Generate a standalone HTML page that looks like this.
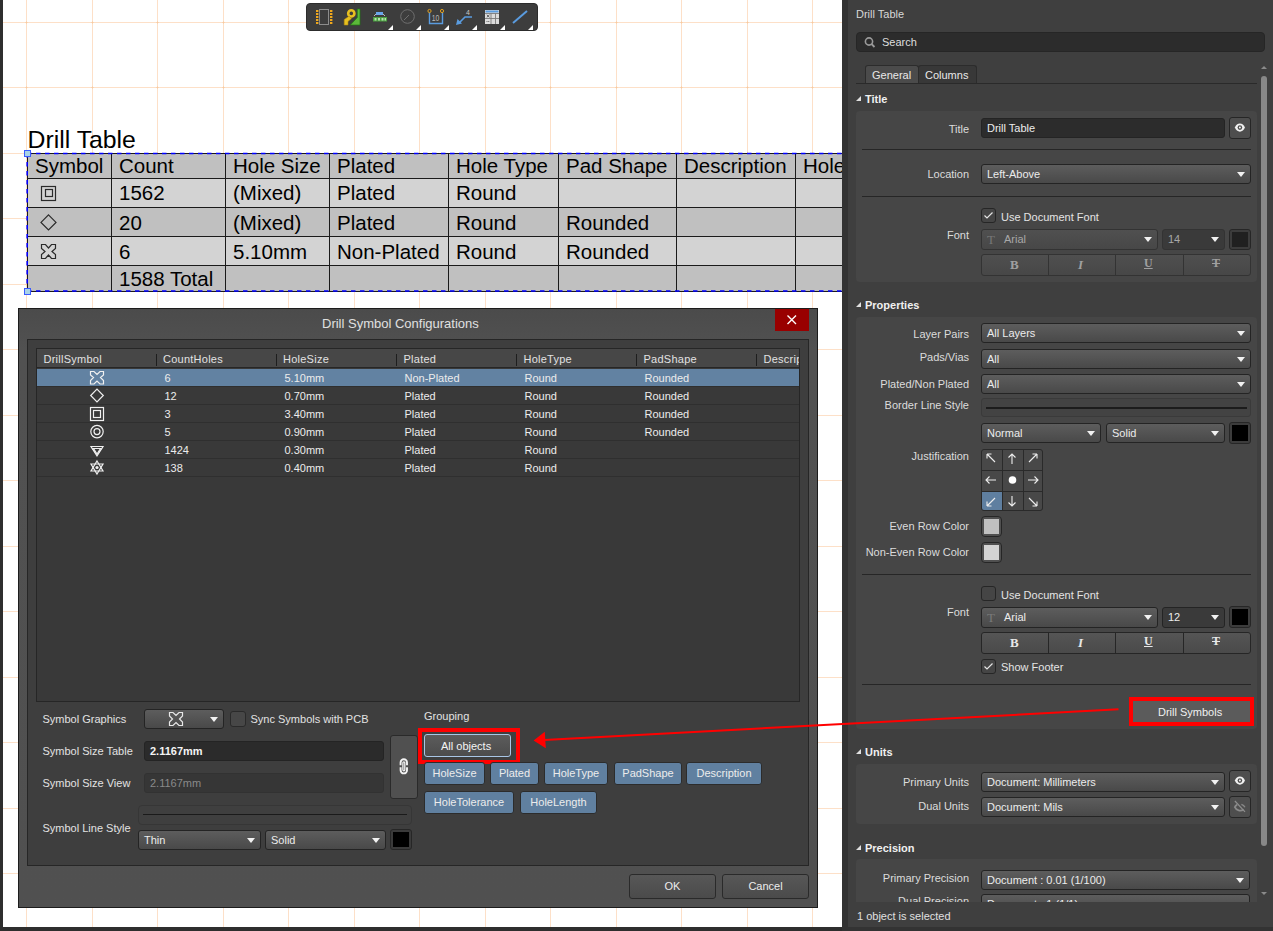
<!DOCTYPE html>
<html><head><meta charset="utf-8">
<style>
*{margin:0;padding:0;box-sizing:border-box}
html,body{width:1273px;height:931px;overflow:hidden;background:#2e2e2e;font-family:"Liberation Sans",sans-serif}
.a{position:absolute}
.t{position:absolute;white-space:nowrap;font-size:11px;line-height:13px;color:#dcdcdc}
#canvas{position:absolute;left:3px;top:0;width:839px;height:927px;background:#fff;overflow:hidden}
.sec{position:absolute;background:#464646;border-radius:4px}
.hd{position:absolute;white-space:nowrap;font-size:11px;line-height:13px;color:#f0f0f0;font-weight:bold}
.tri{position:absolute;width:0;height:0;border-left:5px solid transparent;border-bottom:5px solid #e0e0e0}
.lb{position:absolute;white-space:nowrap;font-size:11px;line-height:13px;color:#dcdcdc;text-align:right;right:304px}
.dd{position:absolute;height:20px;border:1px solid #242424;border-radius:3px;background:linear-gradient(#5d5d5d,#494949);font-size:11px;line-height:18px;color:#ececec;padding-left:5px;white-space:nowrap}
.dd:after{content:"";position:absolute;right:5px;top:7px;border-left:4px solid transparent;border-right:4px solid transparent;border-top:5px solid #f2f2f2}
.inp{position:absolute;height:20px;border:1px solid #242424;border-radius:3px;background:#2c2c2c;font-size:11px;line-height:18px;color:#ececec;padding-left:5px;white-space:nowrap}
.sep{position:absolute;height:1px;background:#262626}
.btn{position:absolute;border:1px solid #262626;border-radius:3px;background:#4d4d4d}
.cb{position:absolute;width:15px;height:15px;border:1px solid #262626;border-radius:3px;background:#454545}

</style></head>
<body>
<!-- CANVAS -->
<div id="canvas">
<svg class="a" style="left:0;top:0" width="839" height="927" shape-rendering="crispEdges">
<g stroke="#fde0c8" stroke-width="1">
<line x1="23.5" y1="0" x2="23.5" y2="927"/>
<line x1="89.5" y1="0" x2="89.5" y2="927"/>
<line x1="154.5" y1="0" x2="154.5" y2="927"/>
<line x1="220.5" y1="0" x2="220.5" y2="927"/>
<line x1="285.5" y1="0" x2="285.5" y2="927"/>
<line x1="351.5" y1="0" x2="351.5" y2="927"/>
<line x1="416.5" y1="0" x2="416.5" y2="927"/>
<line x1="482.5" y1="0" x2="482.5" y2="927"/>
<line x1="547.5" y1="0" x2="547.5" y2="927"/>
<line x1="613.5" y1="0" x2="613.5" y2="927"/>
<line x1="678.5" y1="0" x2="678.5" y2="927"/>
<line x1="744.5" y1="0" x2="744.5" y2="927"/>
<line x1="809.5" y1="0" x2="809.5" y2="927"/>
<line x1="0" y1="22.5" x2="839" y2="22.5"/>
<line x1="0" y1="87.5" x2="839" y2="87.5"/>
<line x1="0" y1="153.5" x2="839" y2="153.5"/>
<line x1="0" y1="218.5" x2="839" y2="218.5"/>
<line x1="0" y1="284.5" x2="839" y2="284.5"/>
<line x1="0" y1="349.5" x2="839" y2="349.5"/>
<line x1="0" y1="415.5" x2="839" y2="415.5"/>
<line x1="0" y1="480.5" x2="839" y2="480.5"/>
<line x1="0" y1="546.5" x2="839" y2="546.5"/>
<line x1="0" y1="611.5" x2="839" y2="611.5"/>
<line x1="0" y1="677.5" x2="839" y2="677.5"/>
<line x1="0" y1="742.5" x2="839" y2="742.5"/>
<line x1="0" y1="808.5" x2="839" y2="808.5"/>
<line x1="0" y1="873.5" x2="839" y2="873.5"/>
</g>
<g fill="#f8caa0"><rect x="23" y="22" width="1" height="1"/><rect x="22" y="22" width="3" height="1" fill-opacity="0.5"/><rect x="23" y="21" width="1" height="3" fill-opacity="0.5"/><rect x="23" y="87" width="1" height="1"/><rect x="22" y="87" width="3" height="1" fill-opacity="0.5"/><rect x="23" y="86" width="1" height="3" fill-opacity="0.5"/><rect x="23" y="153" width="1" height="1"/><rect x="22" y="153" width="3" height="1" fill-opacity="0.5"/><rect x="23" y="152" width="1" height="3" fill-opacity="0.5"/><rect x="23" y="218" width="1" height="1"/><rect x="22" y="218" width="3" height="1" fill-opacity="0.5"/><rect x="23" y="217" width="1" height="3" fill-opacity="0.5"/><rect x="23" y="284" width="1" height="1"/><rect x="22" y="284" width="3" height="1" fill-opacity="0.5"/><rect x="23" y="283" width="1" height="3" fill-opacity="0.5"/><rect x="23" y="349" width="1" height="1"/><rect x="22" y="349" width="3" height="1" fill-opacity="0.5"/><rect x="23" y="348" width="1" height="3" fill-opacity="0.5"/><rect x="23" y="415" width="1" height="1"/><rect x="22" y="415" width="3" height="1" fill-opacity="0.5"/><rect x="23" y="414" width="1" height="3" fill-opacity="0.5"/><rect x="23" y="480" width="1" height="1"/><rect x="22" y="480" width="3" height="1" fill-opacity="0.5"/><rect x="23" y="479" width="1" height="3" fill-opacity="0.5"/><rect x="23" y="546" width="1" height="1"/><rect x="22" y="546" width="3" height="1" fill-opacity="0.5"/><rect x="23" y="545" width="1" height="3" fill-opacity="0.5"/><rect x="23" y="611" width="1" height="1"/><rect x="22" y="611" width="3" height="1" fill-opacity="0.5"/><rect x="23" y="610" width="1" height="3" fill-opacity="0.5"/><rect x="23" y="677" width="1" height="1"/><rect x="22" y="677" width="3" height="1" fill-opacity="0.5"/><rect x="23" y="676" width="1" height="3" fill-opacity="0.5"/><rect x="23" y="742" width="1" height="1"/><rect x="22" y="742" width="3" height="1" fill-opacity="0.5"/><rect x="23" y="741" width="1" height="3" fill-opacity="0.5"/><rect x="23" y="808" width="1" height="1"/><rect x="22" y="808" width="3" height="1" fill-opacity="0.5"/><rect x="23" y="807" width="1" height="3" fill-opacity="0.5"/><rect x="23" y="873" width="1" height="1"/><rect x="22" y="873" width="3" height="1" fill-opacity="0.5"/><rect x="23" y="872" width="1" height="3" fill-opacity="0.5"/><rect x="89" y="22" width="1" height="1"/><rect x="88" y="22" width="3" height="1" fill-opacity="0.5"/><rect x="89" y="21" width="1" height="3" fill-opacity="0.5"/><rect x="89" y="87" width="1" height="1"/><rect x="88" y="87" width="3" height="1" fill-opacity="0.5"/><rect x="89" y="86" width="1" height="3" fill-opacity="0.5"/><rect x="89" y="153" width="1" height="1"/><rect x="88" y="153" width="3" height="1" fill-opacity="0.5"/><rect x="89" y="152" width="1" height="3" fill-opacity="0.5"/><rect x="89" y="218" width="1" height="1"/><rect x="88" y="218" width="3" height="1" fill-opacity="0.5"/><rect x="89" y="217" width="1" height="3" fill-opacity="0.5"/><rect x="89" y="284" width="1" height="1"/><rect x="88" y="284" width="3" height="1" fill-opacity="0.5"/><rect x="89" y="283" width="1" height="3" fill-opacity="0.5"/><rect x="89" y="349" width="1" height="1"/><rect x="88" y="349" width="3" height="1" fill-opacity="0.5"/><rect x="89" y="348" width="1" height="3" fill-opacity="0.5"/><rect x="89" y="415" width="1" height="1"/><rect x="88" y="415" width="3" height="1" fill-opacity="0.5"/><rect x="89" y="414" width="1" height="3" fill-opacity="0.5"/><rect x="89" y="480" width="1" height="1"/><rect x="88" y="480" width="3" height="1" fill-opacity="0.5"/><rect x="89" y="479" width="1" height="3" fill-opacity="0.5"/><rect x="89" y="546" width="1" height="1"/><rect x="88" y="546" width="3" height="1" fill-opacity="0.5"/><rect x="89" y="545" width="1" height="3" fill-opacity="0.5"/><rect x="89" y="611" width="1" height="1"/><rect x="88" y="611" width="3" height="1" fill-opacity="0.5"/><rect x="89" y="610" width="1" height="3" fill-opacity="0.5"/><rect x="89" y="677" width="1" height="1"/><rect x="88" y="677" width="3" height="1" fill-opacity="0.5"/><rect x="89" y="676" width="1" height="3" fill-opacity="0.5"/><rect x="89" y="742" width="1" height="1"/><rect x="88" y="742" width="3" height="1" fill-opacity="0.5"/><rect x="89" y="741" width="1" height="3" fill-opacity="0.5"/><rect x="89" y="808" width="1" height="1"/><rect x="88" y="808" width="3" height="1" fill-opacity="0.5"/><rect x="89" y="807" width="1" height="3" fill-opacity="0.5"/><rect x="89" y="873" width="1" height="1"/><rect x="88" y="873" width="3" height="1" fill-opacity="0.5"/><rect x="89" y="872" width="1" height="3" fill-opacity="0.5"/><rect x="154" y="22" width="1" height="1"/><rect x="153" y="22" width="3" height="1" fill-opacity="0.5"/><rect x="154" y="21" width="1" height="3" fill-opacity="0.5"/><rect x="154" y="87" width="1" height="1"/><rect x="153" y="87" width="3" height="1" fill-opacity="0.5"/><rect x="154" y="86" width="1" height="3" fill-opacity="0.5"/><rect x="154" y="153" width="1" height="1"/><rect x="153" y="153" width="3" height="1" fill-opacity="0.5"/><rect x="154" y="152" width="1" height="3" fill-opacity="0.5"/><rect x="154" y="218" width="1" height="1"/><rect x="153" y="218" width="3" height="1" fill-opacity="0.5"/><rect x="154" y="217" width="1" height="3" fill-opacity="0.5"/><rect x="154" y="284" width="1" height="1"/><rect x="153" y="284" width="3" height="1" fill-opacity="0.5"/><rect x="154" y="283" width="1" height="3" fill-opacity="0.5"/><rect x="154" y="349" width="1" height="1"/><rect x="153" y="349" width="3" height="1" fill-opacity="0.5"/><rect x="154" y="348" width="1" height="3" fill-opacity="0.5"/><rect x="154" y="415" width="1" height="1"/><rect x="153" y="415" width="3" height="1" fill-opacity="0.5"/><rect x="154" y="414" width="1" height="3" fill-opacity="0.5"/><rect x="154" y="480" width="1" height="1"/><rect x="153" y="480" width="3" height="1" fill-opacity="0.5"/><rect x="154" y="479" width="1" height="3" fill-opacity="0.5"/><rect x="154" y="546" width="1" height="1"/><rect x="153" y="546" width="3" height="1" fill-opacity="0.5"/><rect x="154" y="545" width="1" height="3" fill-opacity="0.5"/><rect x="154" y="611" width="1" height="1"/><rect x="153" y="611" width="3" height="1" fill-opacity="0.5"/><rect x="154" y="610" width="1" height="3" fill-opacity="0.5"/><rect x="154" y="677" width="1" height="1"/><rect x="153" y="677" width="3" height="1" fill-opacity="0.5"/><rect x="154" y="676" width="1" height="3" fill-opacity="0.5"/><rect x="154" y="742" width="1" height="1"/><rect x="153" y="742" width="3" height="1" fill-opacity="0.5"/><rect x="154" y="741" width="1" height="3" fill-opacity="0.5"/><rect x="154" y="808" width="1" height="1"/><rect x="153" y="808" width="3" height="1" fill-opacity="0.5"/><rect x="154" y="807" width="1" height="3" fill-opacity="0.5"/><rect x="154" y="873" width="1" height="1"/><rect x="153" y="873" width="3" height="1" fill-opacity="0.5"/><rect x="154" y="872" width="1" height="3" fill-opacity="0.5"/><rect x="220" y="22" width="1" height="1"/><rect x="219" y="22" width="3" height="1" fill-opacity="0.5"/><rect x="220" y="21" width="1" height="3" fill-opacity="0.5"/><rect x="220" y="87" width="1" height="1"/><rect x="219" y="87" width="3" height="1" fill-opacity="0.5"/><rect x="220" y="86" width="1" height="3" fill-opacity="0.5"/><rect x="220" y="153" width="1" height="1"/><rect x="219" y="153" width="3" height="1" fill-opacity="0.5"/><rect x="220" y="152" width="1" height="3" fill-opacity="0.5"/><rect x="220" y="218" width="1" height="1"/><rect x="219" y="218" width="3" height="1" fill-opacity="0.5"/><rect x="220" y="217" width="1" height="3" fill-opacity="0.5"/><rect x="220" y="284" width="1" height="1"/><rect x="219" y="284" width="3" height="1" fill-opacity="0.5"/><rect x="220" y="283" width="1" height="3" fill-opacity="0.5"/><rect x="220" y="349" width="1" height="1"/><rect x="219" y="349" width="3" height="1" fill-opacity="0.5"/><rect x="220" y="348" width="1" height="3" fill-opacity="0.5"/><rect x="220" y="415" width="1" height="1"/><rect x="219" y="415" width="3" height="1" fill-opacity="0.5"/><rect x="220" y="414" width="1" height="3" fill-opacity="0.5"/><rect x="220" y="480" width="1" height="1"/><rect x="219" y="480" width="3" height="1" fill-opacity="0.5"/><rect x="220" y="479" width="1" height="3" fill-opacity="0.5"/><rect x="220" y="546" width="1" height="1"/><rect x="219" y="546" width="3" height="1" fill-opacity="0.5"/><rect x="220" y="545" width="1" height="3" fill-opacity="0.5"/><rect x="220" y="611" width="1" height="1"/><rect x="219" y="611" width="3" height="1" fill-opacity="0.5"/><rect x="220" y="610" width="1" height="3" fill-opacity="0.5"/><rect x="220" y="677" width="1" height="1"/><rect x="219" y="677" width="3" height="1" fill-opacity="0.5"/><rect x="220" y="676" width="1" height="3" fill-opacity="0.5"/><rect x="220" y="742" width="1" height="1"/><rect x="219" y="742" width="3" height="1" fill-opacity="0.5"/><rect x="220" y="741" width="1" height="3" fill-opacity="0.5"/><rect x="220" y="808" width="1" height="1"/><rect x="219" y="808" width="3" height="1" fill-opacity="0.5"/><rect x="220" y="807" width="1" height="3" fill-opacity="0.5"/><rect x="220" y="873" width="1" height="1"/><rect x="219" y="873" width="3" height="1" fill-opacity="0.5"/><rect x="220" y="872" width="1" height="3" fill-opacity="0.5"/><rect x="285" y="22" width="1" height="1"/><rect x="284" y="22" width="3" height="1" fill-opacity="0.5"/><rect x="285" y="21" width="1" height="3" fill-opacity="0.5"/><rect x="285" y="87" width="1" height="1"/><rect x="284" y="87" width="3" height="1" fill-opacity="0.5"/><rect x="285" y="86" width="1" height="3" fill-opacity="0.5"/><rect x="285" y="153" width="1" height="1"/><rect x="284" y="153" width="3" height="1" fill-opacity="0.5"/><rect x="285" y="152" width="1" height="3" fill-opacity="0.5"/><rect x="285" y="218" width="1" height="1"/><rect x="284" y="218" width="3" height="1" fill-opacity="0.5"/><rect x="285" y="217" width="1" height="3" fill-opacity="0.5"/><rect x="285" y="284" width="1" height="1"/><rect x="284" y="284" width="3" height="1" fill-opacity="0.5"/><rect x="285" y="283" width="1" height="3" fill-opacity="0.5"/><rect x="285" y="349" width="1" height="1"/><rect x="284" y="349" width="3" height="1" fill-opacity="0.5"/><rect x="285" y="348" width="1" height="3" fill-opacity="0.5"/><rect x="285" y="415" width="1" height="1"/><rect x="284" y="415" width="3" height="1" fill-opacity="0.5"/><rect x="285" y="414" width="1" height="3" fill-opacity="0.5"/><rect x="285" y="480" width="1" height="1"/><rect x="284" y="480" width="3" height="1" fill-opacity="0.5"/><rect x="285" y="479" width="1" height="3" fill-opacity="0.5"/><rect x="285" y="546" width="1" height="1"/><rect x="284" y="546" width="3" height="1" fill-opacity="0.5"/><rect x="285" y="545" width="1" height="3" fill-opacity="0.5"/><rect x="285" y="611" width="1" height="1"/><rect x="284" y="611" width="3" height="1" fill-opacity="0.5"/><rect x="285" y="610" width="1" height="3" fill-opacity="0.5"/><rect x="285" y="677" width="1" height="1"/><rect x="284" y="677" width="3" height="1" fill-opacity="0.5"/><rect x="285" y="676" width="1" height="3" fill-opacity="0.5"/><rect x="285" y="742" width="1" height="1"/><rect x="284" y="742" width="3" height="1" fill-opacity="0.5"/><rect x="285" y="741" width="1" height="3" fill-opacity="0.5"/><rect x="285" y="808" width="1" height="1"/><rect x="284" y="808" width="3" height="1" fill-opacity="0.5"/><rect x="285" y="807" width="1" height="3" fill-opacity="0.5"/><rect x="285" y="873" width="1" height="1"/><rect x="284" y="873" width="3" height="1" fill-opacity="0.5"/><rect x="285" y="872" width="1" height="3" fill-opacity="0.5"/><rect x="351" y="22" width="1" height="1"/><rect x="350" y="22" width="3" height="1" fill-opacity="0.5"/><rect x="351" y="21" width="1" height="3" fill-opacity="0.5"/><rect x="351" y="87" width="1" height="1"/><rect x="350" y="87" width="3" height="1" fill-opacity="0.5"/><rect x="351" y="86" width="1" height="3" fill-opacity="0.5"/><rect x="351" y="153" width="1" height="1"/><rect x="350" y="153" width="3" height="1" fill-opacity="0.5"/><rect x="351" y="152" width="1" height="3" fill-opacity="0.5"/><rect x="351" y="218" width="1" height="1"/><rect x="350" y="218" width="3" height="1" fill-opacity="0.5"/><rect x="351" y="217" width="1" height="3" fill-opacity="0.5"/><rect x="351" y="284" width="1" height="1"/><rect x="350" y="284" width="3" height="1" fill-opacity="0.5"/><rect x="351" y="283" width="1" height="3" fill-opacity="0.5"/><rect x="351" y="349" width="1" height="1"/><rect x="350" y="349" width="3" height="1" fill-opacity="0.5"/><rect x="351" y="348" width="1" height="3" fill-opacity="0.5"/><rect x="351" y="415" width="1" height="1"/><rect x="350" y="415" width="3" height="1" fill-opacity="0.5"/><rect x="351" y="414" width="1" height="3" fill-opacity="0.5"/><rect x="351" y="480" width="1" height="1"/><rect x="350" y="480" width="3" height="1" fill-opacity="0.5"/><rect x="351" y="479" width="1" height="3" fill-opacity="0.5"/><rect x="351" y="546" width="1" height="1"/><rect x="350" y="546" width="3" height="1" fill-opacity="0.5"/><rect x="351" y="545" width="1" height="3" fill-opacity="0.5"/><rect x="351" y="611" width="1" height="1"/><rect x="350" y="611" width="3" height="1" fill-opacity="0.5"/><rect x="351" y="610" width="1" height="3" fill-opacity="0.5"/><rect x="351" y="677" width="1" height="1"/><rect x="350" y="677" width="3" height="1" fill-opacity="0.5"/><rect x="351" y="676" width="1" height="3" fill-opacity="0.5"/><rect x="351" y="742" width="1" height="1"/><rect x="350" y="742" width="3" height="1" fill-opacity="0.5"/><rect x="351" y="741" width="1" height="3" fill-opacity="0.5"/><rect x="351" y="808" width="1" height="1"/><rect x="350" y="808" width="3" height="1" fill-opacity="0.5"/><rect x="351" y="807" width="1" height="3" fill-opacity="0.5"/><rect x="351" y="873" width="1" height="1"/><rect x="350" y="873" width="3" height="1" fill-opacity="0.5"/><rect x="351" y="872" width="1" height="3" fill-opacity="0.5"/><rect x="416" y="22" width="1" height="1"/><rect x="415" y="22" width="3" height="1" fill-opacity="0.5"/><rect x="416" y="21" width="1" height="3" fill-opacity="0.5"/><rect x="416" y="87" width="1" height="1"/><rect x="415" y="87" width="3" height="1" fill-opacity="0.5"/><rect x="416" y="86" width="1" height="3" fill-opacity="0.5"/><rect x="416" y="153" width="1" height="1"/><rect x="415" y="153" width="3" height="1" fill-opacity="0.5"/><rect x="416" y="152" width="1" height="3" fill-opacity="0.5"/><rect x="416" y="218" width="1" height="1"/><rect x="415" y="218" width="3" height="1" fill-opacity="0.5"/><rect x="416" y="217" width="1" height="3" fill-opacity="0.5"/><rect x="416" y="284" width="1" height="1"/><rect x="415" y="284" width="3" height="1" fill-opacity="0.5"/><rect x="416" y="283" width="1" height="3" fill-opacity="0.5"/><rect x="416" y="349" width="1" height="1"/><rect x="415" y="349" width="3" height="1" fill-opacity="0.5"/><rect x="416" y="348" width="1" height="3" fill-opacity="0.5"/><rect x="416" y="415" width="1" height="1"/><rect x="415" y="415" width="3" height="1" fill-opacity="0.5"/><rect x="416" y="414" width="1" height="3" fill-opacity="0.5"/><rect x="416" y="480" width="1" height="1"/><rect x="415" y="480" width="3" height="1" fill-opacity="0.5"/><rect x="416" y="479" width="1" height="3" fill-opacity="0.5"/><rect x="416" y="546" width="1" height="1"/><rect x="415" y="546" width="3" height="1" fill-opacity="0.5"/><rect x="416" y="545" width="1" height="3" fill-opacity="0.5"/><rect x="416" y="611" width="1" height="1"/><rect x="415" y="611" width="3" height="1" fill-opacity="0.5"/><rect x="416" y="610" width="1" height="3" fill-opacity="0.5"/><rect x="416" y="677" width="1" height="1"/><rect x="415" y="677" width="3" height="1" fill-opacity="0.5"/><rect x="416" y="676" width="1" height="3" fill-opacity="0.5"/><rect x="416" y="742" width="1" height="1"/><rect x="415" y="742" width="3" height="1" fill-opacity="0.5"/><rect x="416" y="741" width="1" height="3" fill-opacity="0.5"/><rect x="416" y="808" width="1" height="1"/><rect x="415" y="808" width="3" height="1" fill-opacity="0.5"/><rect x="416" y="807" width="1" height="3" fill-opacity="0.5"/><rect x="416" y="873" width="1" height="1"/><rect x="415" y="873" width="3" height="1" fill-opacity="0.5"/><rect x="416" y="872" width="1" height="3" fill-opacity="0.5"/><rect x="482" y="22" width="1" height="1"/><rect x="481" y="22" width="3" height="1" fill-opacity="0.5"/><rect x="482" y="21" width="1" height="3" fill-opacity="0.5"/><rect x="482" y="87" width="1" height="1"/><rect x="481" y="87" width="3" height="1" fill-opacity="0.5"/><rect x="482" y="86" width="1" height="3" fill-opacity="0.5"/><rect x="482" y="153" width="1" height="1"/><rect x="481" y="153" width="3" height="1" fill-opacity="0.5"/><rect x="482" y="152" width="1" height="3" fill-opacity="0.5"/><rect x="482" y="218" width="1" height="1"/><rect x="481" y="218" width="3" height="1" fill-opacity="0.5"/><rect x="482" y="217" width="1" height="3" fill-opacity="0.5"/><rect x="482" y="284" width="1" height="1"/><rect x="481" y="284" width="3" height="1" fill-opacity="0.5"/><rect x="482" y="283" width="1" height="3" fill-opacity="0.5"/><rect x="482" y="349" width="1" height="1"/><rect x="481" y="349" width="3" height="1" fill-opacity="0.5"/><rect x="482" y="348" width="1" height="3" fill-opacity="0.5"/><rect x="482" y="415" width="1" height="1"/><rect x="481" y="415" width="3" height="1" fill-opacity="0.5"/><rect x="482" y="414" width="1" height="3" fill-opacity="0.5"/><rect x="482" y="480" width="1" height="1"/><rect x="481" y="480" width="3" height="1" fill-opacity="0.5"/><rect x="482" y="479" width="1" height="3" fill-opacity="0.5"/><rect x="482" y="546" width="1" height="1"/><rect x="481" y="546" width="3" height="1" fill-opacity="0.5"/><rect x="482" y="545" width="1" height="3" fill-opacity="0.5"/><rect x="482" y="611" width="1" height="1"/><rect x="481" y="611" width="3" height="1" fill-opacity="0.5"/><rect x="482" y="610" width="1" height="3" fill-opacity="0.5"/><rect x="482" y="677" width="1" height="1"/><rect x="481" y="677" width="3" height="1" fill-opacity="0.5"/><rect x="482" y="676" width="1" height="3" fill-opacity="0.5"/><rect x="482" y="742" width="1" height="1"/><rect x="481" y="742" width="3" height="1" fill-opacity="0.5"/><rect x="482" y="741" width="1" height="3" fill-opacity="0.5"/><rect x="482" y="808" width="1" height="1"/><rect x="481" y="808" width="3" height="1" fill-opacity="0.5"/><rect x="482" y="807" width="1" height="3" fill-opacity="0.5"/><rect x="482" y="873" width="1" height="1"/><rect x="481" y="873" width="3" height="1" fill-opacity="0.5"/><rect x="482" y="872" width="1" height="3" fill-opacity="0.5"/><rect x="547" y="22" width="1" height="1"/><rect x="546" y="22" width="3" height="1" fill-opacity="0.5"/><rect x="547" y="21" width="1" height="3" fill-opacity="0.5"/><rect x="547" y="87" width="1" height="1"/><rect x="546" y="87" width="3" height="1" fill-opacity="0.5"/><rect x="547" y="86" width="1" height="3" fill-opacity="0.5"/><rect x="547" y="153" width="1" height="1"/><rect x="546" y="153" width="3" height="1" fill-opacity="0.5"/><rect x="547" y="152" width="1" height="3" fill-opacity="0.5"/><rect x="547" y="218" width="1" height="1"/><rect x="546" y="218" width="3" height="1" fill-opacity="0.5"/><rect x="547" y="217" width="1" height="3" fill-opacity="0.5"/><rect x="547" y="284" width="1" height="1"/><rect x="546" y="284" width="3" height="1" fill-opacity="0.5"/><rect x="547" y="283" width="1" height="3" fill-opacity="0.5"/><rect x="547" y="349" width="1" height="1"/><rect x="546" y="349" width="3" height="1" fill-opacity="0.5"/><rect x="547" y="348" width="1" height="3" fill-opacity="0.5"/><rect x="547" y="415" width="1" height="1"/><rect x="546" y="415" width="3" height="1" fill-opacity="0.5"/><rect x="547" y="414" width="1" height="3" fill-opacity="0.5"/><rect x="547" y="480" width="1" height="1"/><rect x="546" y="480" width="3" height="1" fill-opacity="0.5"/><rect x="547" y="479" width="1" height="3" fill-opacity="0.5"/><rect x="547" y="546" width="1" height="1"/><rect x="546" y="546" width="3" height="1" fill-opacity="0.5"/><rect x="547" y="545" width="1" height="3" fill-opacity="0.5"/><rect x="547" y="611" width="1" height="1"/><rect x="546" y="611" width="3" height="1" fill-opacity="0.5"/><rect x="547" y="610" width="1" height="3" fill-opacity="0.5"/><rect x="547" y="677" width="1" height="1"/><rect x="546" y="677" width="3" height="1" fill-opacity="0.5"/><rect x="547" y="676" width="1" height="3" fill-opacity="0.5"/><rect x="547" y="742" width="1" height="1"/><rect x="546" y="742" width="3" height="1" fill-opacity="0.5"/><rect x="547" y="741" width="1" height="3" fill-opacity="0.5"/><rect x="547" y="808" width="1" height="1"/><rect x="546" y="808" width="3" height="1" fill-opacity="0.5"/><rect x="547" y="807" width="1" height="3" fill-opacity="0.5"/><rect x="547" y="873" width="1" height="1"/><rect x="546" y="873" width="3" height="1" fill-opacity="0.5"/><rect x="547" y="872" width="1" height="3" fill-opacity="0.5"/><rect x="613" y="22" width="1" height="1"/><rect x="612" y="22" width="3" height="1" fill-opacity="0.5"/><rect x="613" y="21" width="1" height="3" fill-opacity="0.5"/><rect x="613" y="87" width="1" height="1"/><rect x="612" y="87" width="3" height="1" fill-opacity="0.5"/><rect x="613" y="86" width="1" height="3" fill-opacity="0.5"/><rect x="613" y="153" width="1" height="1"/><rect x="612" y="153" width="3" height="1" fill-opacity="0.5"/><rect x="613" y="152" width="1" height="3" fill-opacity="0.5"/><rect x="613" y="218" width="1" height="1"/><rect x="612" y="218" width="3" height="1" fill-opacity="0.5"/><rect x="613" y="217" width="1" height="3" fill-opacity="0.5"/><rect x="613" y="284" width="1" height="1"/><rect x="612" y="284" width="3" height="1" fill-opacity="0.5"/><rect x="613" y="283" width="1" height="3" fill-opacity="0.5"/><rect x="613" y="349" width="1" height="1"/><rect x="612" y="349" width="3" height="1" fill-opacity="0.5"/><rect x="613" y="348" width="1" height="3" fill-opacity="0.5"/><rect x="613" y="415" width="1" height="1"/><rect x="612" y="415" width="3" height="1" fill-opacity="0.5"/><rect x="613" y="414" width="1" height="3" fill-opacity="0.5"/><rect x="613" y="480" width="1" height="1"/><rect x="612" y="480" width="3" height="1" fill-opacity="0.5"/><rect x="613" y="479" width="1" height="3" fill-opacity="0.5"/><rect x="613" y="546" width="1" height="1"/><rect x="612" y="546" width="3" height="1" fill-opacity="0.5"/><rect x="613" y="545" width="1" height="3" fill-opacity="0.5"/><rect x="613" y="611" width="1" height="1"/><rect x="612" y="611" width="3" height="1" fill-opacity="0.5"/><rect x="613" y="610" width="1" height="3" fill-opacity="0.5"/><rect x="613" y="677" width="1" height="1"/><rect x="612" y="677" width="3" height="1" fill-opacity="0.5"/><rect x="613" y="676" width="1" height="3" fill-opacity="0.5"/><rect x="613" y="742" width="1" height="1"/><rect x="612" y="742" width="3" height="1" fill-opacity="0.5"/><rect x="613" y="741" width="1" height="3" fill-opacity="0.5"/><rect x="613" y="808" width="1" height="1"/><rect x="612" y="808" width="3" height="1" fill-opacity="0.5"/><rect x="613" y="807" width="1" height="3" fill-opacity="0.5"/><rect x="613" y="873" width="1" height="1"/><rect x="612" y="873" width="3" height="1" fill-opacity="0.5"/><rect x="613" y="872" width="1" height="3" fill-opacity="0.5"/><rect x="678" y="22" width="1" height="1"/><rect x="677" y="22" width="3" height="1" fill-opacity="0.5"/><rect x="678" y="21" width="1" height="3" fill-opacity="0.5"/><rect x="678" y="87" width="1" height="1"/><rect x="677" y="87" width="3" height="1" fill-opacity="0.5"/><rect x="678" y="86" width="1" height="3" fill-opacity="0.5"/><rect x="678" y="153" width="1" height="1"/><rect x="677" y="153" width="3" height="1" fill-opacity="0.5"/><rect x="678" y="152" width="1" height="3" fill-opacity="0.5"/><rect x="678" y="218" width="1" height="1"/><rect x="677" y="218" width="3" height="1" fill-opacity="0.5"/><rect x="678" y="217" width="1" height="3" fill-opacity="0.5"/><rect x="678" y="284" width="1" height="1"/><rect x="677" y="284" width="3" height="1" fill-opacity="0.5"/><rect x="678" y="283" width="1" height="3" fill-opacity="0.5"/><rect x="678" y="349" width="1" height="1"/><rect x="677" y="349" width="3" height="1" fill-opacity="0.5"/><rect x="678" y="348" width="1" height="3" fill-opacity="0.5"/><rect x="678" y="415" width="1" height="1"/><rect x="677" y="415" width="3" height="1" fill-opacity="0.5"/><rect x="678" y="414" width="1" height="3" fill-opacity="0.5"/><rect x="678" y="480" width="1" height="1"/><rect x="677" y="480" width="3" height="1" fill-opacity="0.5"/><rect x="678" y="479" width="1" height="3" fill-opacity="0.5"/><rect x="678" y="546" width="1" height="1"/><rect x="677" y="546" width="3" height="1" fill-opacity="0.5"/><rect x="678" y="545" width="1" height="3" fill-opacity="0.5"/><rect x="678" y="611" width="1" height="1"/><rect x="677" y="611" width="3" height="1" fill-opacity="0.5"/><rect x="678" y="610" width="1" height="3" fill-opacity="0.5"/><rect x="678" y="677" width="1" height="1"/><rect x="677" y="677" width="3" height="1" fill-opacity="0.5"/><rect x="678" y="676" width="1" height="3" fill-opacity="0.5"/><rect x="678" y="742" width="1" height="1"/><rect x="677" y="742" width="3" height="1" fill-opacity="0.5"/><rect x="678" y="741" width="1" height="3" fill-opacity="0.5"/><rect x="678" y="808" width="1" height="1"/><rect x="677" y="808" width="3" height="1" fill-opacity="0.5"/><rect x="678" y="807" width="1" height="3" fill-opacity="0.5"/><rect x="678" y="873" width="1" height="1"/><rect x="677" y="873" width="3" height="1" fill-opacity="0.5"/><rect x="678" y="872" width="1" height="3" fill-opacity="0.5"/><rect x="744" y="22" width="1" height="1"/><rect x="743" y="22" width="3" height="1" fill-opacity="0.5"/><rect x="744" y="21" width="1" height="3" fill-opacity="0.5"/><rect x="744" y="87" width="1" height="1"/><rect x="743" y="87" width="3" height="1" fill-opacity="0.5"/><rect x="744" y="86" width="1" height="3" fill-opacity="0.5"/><rect x="744" y="153" width="1" height="1"/><rect x="743" y="153" width="3" height="1" fill-opacity="0.5"/><rect x="744" y="152" width="1" height="3" fill-opacity="0.5"/><rect x="744" y="218" width="1" height="1"/><rect x="743" y="218" width="3" height="1" fill-opacity="0.5"/><rect x="744" y="217" width="1" height="3" fill-opacity="0.5"/><rect x="744" y="284" width="1" height="1"/><rect x="743" y="284" width="3" height="1" fill-opacity="0.5"/><rect x="744" y="283" width="1" height="3" fill-opacity="0.5"/><rect x="744" y="349" width="1" height="1"/><rect x="743" y="349" width="3" height="1" fill-opacity="0.5"/><rect x="744" y="348" width="1" height="3" fill-opacity="0.5"/><rect x="744" y="415" width="1" height="1"/><rect x="743" y="415" width="3" height="1" fill-opacity="0.5"/><rect x="744" y="414" width="1" height="3" fill-opacity="0.5"/><rect x="744" y="480" width="1" height="1"/><rect x="743" y="480" width="3" height="1" fill-opacity="0.5"/><rect x="744" y="479" width="1" height="3" fill-opacity="0.5"/><rect x="744" y="546" width="1" height="1"/><rect x="743" y="546" width="3" height="1" fill-opacity="0.5"/><rect x="744" y="545" width="1" height="3" fill-opacity="0.5"/><rect x="744" y="611" width="1" height="1"/><rect x="743" y="611" width="3" height="1" fill-opacity="0.5"/><rect x="744" y="610" width="1" height="3" fill-opacity="0.5"/><rect x="744" y="677" width="1" height="1"/><rect x="743" y="677" width="3" height="1" fill-opacity="0.5"/><rect x="744" y="676" width="1" height="3" fill-opacity="0.5"/><rect x="744" y="742" width="1" height="1"/><rect x="743" y="742" width="3" height="1" fill-opacity="0.5"/><rect x="744" y="741" width="1" height="3" fill-opacity="0.5"/><rect x="744" y="808" width="1" height="1"/><rect x="743" y="808" width="3" height="1" fill-opacity="0.5"/><rect x="744" y="807" width="1" height="3" fill-opacity="0.5"/><rect x="744" y="873" width="1" height="1"/><rect x="743" y="873" width="3" height="1" fill-opacity="0.5"/><rect x="744" y="872" width="1" height="3" fill-opacity="0.5"/><rect x="809" y="22" width="1" height="1"/><rect x="808" y="22" width="3" height="1" fill-opacity="0.5"/><rect x="809" y="21" width="1" height="3" fill-opacity="0.5"/><rect x="809" y="87" width="1" height="1"/><rect x="808" y="87" width="3" height="1" fill-opacity="0.5"/><rect x="809" y="86" width="1" height="3" fill-opacity="0.5"/><rect x="809" y="153" width="1" height="1"/><rect x="808" y="153" width="3" height="1" fill-opacity="0.5"/><rect x="809" y="152" width="1" height="3" fill-opacity="0.5"/><rect x="809" y="218" width="1" height="1"/><rect x="808" y="218" width="3" height="1" fill-opacity="0.5"/><rect x="809" y="217" width="1" height="3" fill-opacity="0.5"/><rect x="809" y="284" width="1" height="1"/><rect x="808" y="284" width="3" height="1" fill-opacity="0.5"/><rect x="809" y="283" width="1" height="3" fill-opacity="0.5"/><rect x="809" y="349" width="1" height="1"/><rect x="808" y="349" width="3" height="1" fill-opacity="0.5"/><rect x="809" y="348" width="1" height="3" fill-opacity="0.5"/><rect x="809" y="415" width="1" height="1"/><rect x="808" y="415" width="3" height="1" fill-opacity="0.5"/><rect x="809" y="414" width="1" height="3" fill-opacity="0.5"/><rect x="809" y="480" width="1" height="1"/><rect x="808" y="480" width="3" height="1" fill-opacity="0.5"/><rect x="809" y="479" width="1" height="3" fill-opacity="0.5"/><rect x="809" y="546" width="1" height="1"/><rect x="808" y="546" width="3" height="1" fill-opacity="0.5"/><rect x="809" y="545" width="1" height="3" fill-opacity="0.5"/><rect x="809" y="611" width="1" height="1"/><rect x="808" y="611" width="3" height="1" fill-opacity="0.5"/><rect x="809" y="610" width="1" height="3" fill-opacity="0.5"/><rect x="809" y="677" width="1" height="1"/><rect x="808" y="677" width="3" height="1" fill-opacity="0.5"/><rect x="809" y="676" width="1" height="3" fill-opacity="0.5"/><rect x="809" y="742" width="1" height="1"/><rect x="808" y="742" width="3" height="1" fill-opacity="0.5"/><rect x="809" y="741" width="1" height="3" fill-opacity="0.5"/><rect x="809" y="808" width="1" height="1"/><rect x="808" y="808" width="3" height="1" fill-opacity="0.5"/><rect x="809" y="807" width="1" height="3" fill-opacity="0.5"/><rect x="809" y="873" width="1" height="1"/><rect x="808" y="873" width="3" height="1" fill-opacity="0.5"/><rect x="809" y="872" width="1" height="3" fill-opacity="0.5"/></g>
</svg>
</div>
<!-- TABLE -->
<div class="a" style="left:0;top:0;width:842px;height:931px;overflow:hidden">
<div class="a" style="left:27.5px;top:125.7px;font-size:24.8px;line-height:28px;color:#000;white-space:nowrap">Drill Table</div>
<div class="a" style="left:27px;top:153px;width:900px;height:25px;background:#c0c0c0"></div>
<div class="a" style="left:27px;top:178px;width:900px;height:29px;background:#d3d3d3"></div>
<div class="a" style="left:27px;top:207px;width:900px;height:29px;background:#c0c0c0"></div>
<div class="a" style="left:27px;top:236px;width:900px;height:29px;background:#d3d3d3"></div>
<div class="a" style="left:27px;top:265px;width:900px;height:26px;background:#c0c0c0"></div>
<div class="a" style="left:27px;top:153px;width:900px;height:1px;background:#1a1a1a"></div>
<div class="a" style="left:27px;top:178px;width:900px;height:1px;background:#1a1a1a"></div>
<div class="a" style="left:27px;top:207px;width:900px;height:1px;background:#1a1a1a"></div>
<div class="a" style="left:27px;top:236px;width:900px;height:1px;background:#1a1a1a"></div>
<div class="a" style="left:27px;top:265px;width:900px;height:1px;background:#1a1a1a"></div>
<div class="a" style="left:27px;top:291px;width:900px;height:1px;background:#1a1a1a"></div>
<div class="a" style="left:27px;top:153px;width:1px;height:138px;background:#1a1a1a"></div>
<div class="a" style="left:111px;top:153px;width:1px;height:138px;background:#1a1a1a"></div>
<div class="a" style="left:225px;top:153px;width:1px;height:138px;background:#1a1a1a"></div>
<div class="a" style="left:329px;top:153px;width:1px;height:138px;background:#1a1a1a"></div>
<div class="a" style="left:448px;top:153px;width:1px;height:138px;background:#1a1a1a"></div>
<div class="a" style="left:558px;top:153px;width:1px;height:138px;background:#1a1a1a"></div>
<div class="a" style="left:676px;top:153px;width:1px;height:138px;background:#1a1a1a"></div>
<div class="a" style="left:795px;top:153px;width:1px;height:138px;background:#1a1a1a"></div>
<div class="a" style="left:920px;top:153px;width:1px;height:138px;background:#1a1a1a"></div>
<div class="a" style="left:35px;top:154.4px;font-size:20.5px;line-height:24px;color:#000;white-space:nowrap">Symbol</div>
<div class="a" style="left:119px;top:154.4px;font-size:20.5px;line-height:24px;color:#000;white-space:nowrap">Count</div>
<div class="a" style="left:233px;top:154.4px;font-size:20.5px;line-height:24px;color:#000;white-space:nowrap">Hole Size</div>
<div class="a" style="left:337px;top:154.4px;font-size:20.5px;line-height:24px;color:#000;white-space:nowrap">Plated</div>
<div class="a" style="left:456px;top:154.4px;font-size:20.5px;line-height:24px;color:#000;white-space:nowrap">Hole Type</div>
<div class="a" style="left:566px;top:154.4px;font-size:20.5px;line-height:24px;color:#000;white-space:nowrap">Pad Shape</div>
<div class="a" style="left:684px;top:154.4px;font-size:20.5px;line-height:24px;color:#000;white-space:nowrap">Description</div>
<div class="a" style="left:803px;top:154.4px;font-size:20.5px;line-height:24px;color:#000;white-space:nowrap">Hole Tolerance</div>
<div class="a" style="left:119px;top:181.4px;font-size:20.5px;line-height:24px;color:#000;white-space:nowrap">1562</div>
<div class="a" style="left:233px;top:181.4px;font-size:20.5px;line-height:24px;color:#000;white-space:nowrap">(Mixed)</div>
<div class="a" style="left:337px;top:181.4px;font-size:20.5px;line-height:24px;color:#000;white-space:nowrap">Plated</div>
<div class="a" style="left:456px;top:181.4px;font-size:20.5px;line-height:24px;color:#000;white-space:nowrap">Round</div>
<div class="a" style="left:119px;top:210.9px;font-size:20.5px;line-height:24px;color:#000;white-space:nowrap">20</div>
<div class="a" style="left:233px;top:210.9px;font-size:20.5px;line-height:24px;color:#000;white-space:nowrap">(Mixed)</div>
<div class="a" style="left:337px;top:210.9px;font-size:20.5px;line-height:24px;color:#000;white-space:nowrap">Plated</div>
<div class="a" style="left:456px;top:210.9px;font-size:20.5px;line-height:24px;color:#000;white-space:nowrap">Round</div>
<div class="a" style="left:566px;top:210.9px;font-size:20.5px;line-height:24px;color:#000;white-space:nowrap">Rounded</div>
<div class="a" style="left:119px;top:240.4px;font-size:20.5px;line-height:24px;color:#000;white-space:nowrap">6</div>
<div class="a" style="left:233px;top:240.4px;font-size:20.5px;line-height:24px;color:#000;white-space:nowrap">5.10mm</div>
<div class="a" style="left:337px;top:240.4px;font-size:20.5px;line-height:24px;color:#000;white-space:nowrap">Non-Plated</div>
<div class="a" style="left:456px;top:240.4px;font-size:20.5px;line-height:24px;color:#000;white-space:nowrap">Round</div>
<div class="a" style="left:566px;top:240.4px;font-size:20.5px;line-height:24px;color:#000;white-space:nowrap">Rounded</div>
<div class="a" style="left:119px;top:267.4px;font-size:20.5px;line-height:24px;color:#000;white-space:nowrap">1588 Total</div>
</div>
<!-- SEL -->
<svg class="a" style="left:0;top:0" width="842" height="300">
<g fill="none" stroke="#2a2a2a" stroke-width="1.2">
<rect x="41.5" y="186.5" width="14" height="14"/>
<rect x="45.5" y="189.5" width="7" height="7"/>
<path d="M48.5 214.9 L56 222.4 L48.5 229.9 L41 222.4 Z"/>
<path d="M41.5 244.5 L45.5 244.5 L48.5 248 L51.5 244.5 L55.5 244.5 L55.5 248.5 L52 251.5 L55.5 254.5 L55.5 258.5 L51.5 258.5 L48.5 255 L45.5 258.5 L41.5 258.5 L41.5 254.5 L45 251.5 L41.5 248.5 Z"/>
</g>
<g fill="none" stroke="#0000ff" stroke-width="1.6" stroke-dasharray="4.5 4.5">
<path d="M27 153.5 H842"/>
<path d="M27 291 H842"/>
<path d="M27.2 153 V291"/>
</g>
<rect x="24.5" y="150.5" width="6" height="6" fill="#a9d3e6" stroke="#3b5bff" stroke-width="1"/>
<rect x="24.5" y="288.5" width="6" height="6" fill="#a9d3e6" stroke="#3b5bff" stroke-width="1"/>
</svg>
<!-- TOOLBAR -->
<div class="a" style="left:306px;top:3px;width:232px;height:28px;background:#3d3d3d;border-radius:4px;border:1px solid #2c2c2c"></div>

<!-- TBICONS -->
<svg class="a" style="left:0;top:0" width="560" height="40">
<g fill="#f0a81c">
<rect x="316" y="10" width="2.4" height="2"/><rect x="316" y="13" width="2.4" height="2"/><rect x="316" y="16" width="2.4" height="2"/><rect x="316" y="19" width="2.4" height="2"/><rect x="316" y="22" width="2.4" height="2"/>
<rect x="330" y="10" width="2.4" height="2"/><rect x="330" y="13" width="2.4" height="2"/><rect x="330" y="16" width="2.4" height="2"/><rect x="330" y="19" width="2.4" height="2"/><rect x="330" y="22" width="2.4" height="2"/>
</g>
<rect x="319.5" y="9.5" width="9" height="15" fill="none" stroke="#8c8c8c" stroke-width="1"/>
<path d="M350.3 25 L357.3 17.5 L357.3 9 L360 9 L360 25 Z" fill="#5cb83a" stroke="#1f7a12" stroke-width="0.7"/>
<circle cx="351.3" cy="13.4" r="3.1" fill="none" stroke="#e8c020" stroke-width="2.6"/>
<path d="M349 16.2 L344.2 19.6 L344.2 25 L348 25 L348 21.4 L351.5 18.6 Z" fill="#e8c020" stroke="#b08a10" stroke-width="0.6"/>
<rect x="376" y="12" width="7" height="3" fill="#6aa6ec"/>
<path d="M374 16 L376 14 M385 16 L383 14" stroke="#bbb" stroke-width="1"/>
<rect x="373" y="17" width="14" height="4.5" fill="#4aa040"/>
<g fill="#b8e0b0"><rect x="374.5" y="18" width="2" height="2.5"/><rect x="378" y="18" width="2" height="2.5"/><rect x="381.5" y="18" width="2" height="2.5"/><rect x="384.5" y="18" width="1.5" height="2.5"/></g>
<circle cx="407.5" cy="16.5" r="6.8" fill="none" stroke="#6e6e6e" stroke-width="1"/>
<path d="M404 20 L409 15" stroke="#6e6e6e" stroke-width="1"/>
<path d="M429.5 12.5 V23.5 H442.5 V12.5" fill="none" stroke="#5a9ce0" stroke-width="1.4"/>
<circle cx="429.5" cy="11" r="1.6" fill="none" stroke="#e0a020" stroke-width="1"/>
<circle cx="442" cy="11" r="1.6" fill="none" stroke="#e0a020" stroke-width="1"/>
<text x="431.8" y="21" font-size="8.6" fill="#b8b8b8" font-family="Liberation Sans" textLength="7.6" lengthAdjust="spacingAndGlyphs">10</text>
<path d="M472 17 H465 L459 23" fill="none" stroke="#5a9ce0" stroke-width="1.6"/>
<path d="M456 25 L457.5 19 L462 23.5 Z" fill="#5a9ce0"/>
<text x="466" y="15" font-size="7" fill="#c8c8c8" font-family="Liberation Sans">4</text>
<rect x="485" y="10" width="14" height="14" fill="#dcdcdc"/>
<rect x="485.5" y="10.5" width="13" height="2" fill="#5a9ce0"/>
<path d="M485 13.5 H499 M485 18.5 H499 M491 13.5 V24 M495.5 13.5 V24" stroke="#7a7a7a" stroke-width="0.9"/>
<path d="M486.8 14.8 L489.5 17.3 M489.5 14.8 L486.8 17.3" stroke="#444" stroke-width="0.8"/>
<path d="M486.5 21.5 H490" stroke="#666" stroke-width="1" stroke-dasharray="1 0.7"/>
<path d="M513 23 L527 11" stroke="#5a9ce0" stroke-width="2"/>
<g fill="#fff">
<path d="M388 30 L393 25 L393 30 Z"/><path d="M416 30 L421 25 L421 30 Z"/><path d="M444 30 L449 25 L449 30 Z"/><path d="M472 30 L477 25 L477 30 Z"/><path d="M500 30 L505 25 L505 30 Z"/><path d="M528 30 L533 25 L533 30 Z"/>
</g>
</svg>

<!-- PANEL -->
<div class="a" style="left:842px;top:0;width:6px;height:931px;background:#333"></div>
<div class="a" style="left:848px;top:0;width:425px;height:927px;background:#3f3f3f"></div>
<div class="a" style="left:842px;top:927px;width:431px;height:4px;background:#333"></div>
<div class="t" style="left:856px;top:8px;color:#d8d8d8">Drill Table</div>
<div class="a" style="left:856px;top:32px;width:409px;height:20px;background:#2c2c2c;border:1px solid #262626;border-radius:4px"></div>
<svg class="a" style="left:862px;top:35px" width="16" height="16"><circle cx="7" cy="6.5" r="3.6" fill="none" stroke="#9a9a9a" stroke-width="1.6"/><path d="M9.5 9 L12.5 12" stroke="#9a9a9a" stroke-width="1.8"/></svg>
<div class="t" style="left:882px;top:36px;color:#dedede">Search</div>
<!-- tabs -->
<div class="a" style="left:865px;top:65px;width:54px;height:19px;background:#4b4b4b;border:1px solid #2c2c2c;border-bottom:none;border-radius:3px 3px 0 0"></div>
<div class="a" style="left:918px;top:65px;width:59px;height:19px;background:#383838;border:1px solid #2c2c2c;border-bottom:none;border-radius:3px 3px 0 0"></div>
<div class="t" style="left:872px;top:69px;color:#e8e8e8">General</div>
<div class="t" style="left:925px;top:69px;color:#e8e8e8">Columns</div>
<div class="sep" style="left:856px;top:83px;width:401px;background:#2a2a2a"></div>
<!-- scrollbar -->
<div class="a" style="left:1261px;top:66px;width:0;height:0;border-left:3.5px solid transparent;border-right:3.5px solid transparent;border-bottom:3px solid #8a8a8a"></div>
<div class="a" style="left:1261px;top:76px;width:6px;height:770px;background:#888;border-radius:3px"></div>
<div class="a" style="left:1261px;top:892px;width:0;height:0;border-left:3.5px solid transparent;border-right:3.5px solid transparent;border-top:3px solid #8a8a8a"></div>

<!-- TITLE -->
<div class="tri" style="left:856px;top:96px"></div>
<div class="hd" style="left:865px;top:93px">Title</div>
<div class="sec" style="left:856px;top:111px;width:401px;height:171px"></div>
<div class="lb" style="top:123px">Title</div>
<div class="inp" style="left:981px;top:118px;width:244px">Drill Table</div>
<div class="btn" style="left:1229px;top:117px;width:22px;height:22px;background:#4e4e4e"></div>
<svg class="a" style="left:1229px;top:117px" width="22" height="22"><path d="M5.9 10.6 C7.6 5.2 14.2 5.2 15.9 10.6 C14.2 16 7.6 16 5.9 10.6 Z" fill="#f2f2f2"/><circle cx="10.9" cy="10.6" r="2.3" fill="#4e4e4e"/><circle cx="10.9" cy="10.6" r="1" fill="#f2f2f2"/></svg>
<div class="sep" style="left:862px;top:149px;width:389px"></div>
<div class="lb" style="top:168px">Location</div>
<div class="dd" style="left:981px;top:164px;width:270px">Left-Above</div>
<div class="sep" style="left:862px;top:196px;width:389px"></div>
<div class="cb" style="left:981px;top:208px"></div>
<svg class="a" style="left:981px;top:208px" width="15" height="15"><path d="M3.5 7.5 L6 10 L11.5 4.5" fill="none" stroke="#e6e6e6" stroke-width="1.2"/></svg>
<div class="t" style="left:1001px;top:211px;color:#e4e4e4">Use Document Font</div>
<div class="lb" style="top:229px">Font</div>
<div class="dd" style="left:981px;top:229px;width:177px;height:21px;color:#a8a8a8;padding-left:22px;background:linear-gradient(#505050,#474747);border-color:#333">Arial</div>
<div class="t" style="left:987px;top:233px;font-family:'Liberation Serif';font-size:13px;color:#777">T</div>
<div class="dd" style="left:1162px;top:229px;width:63px;height:21px;color:#a8a8a8;background:#3a3a3a;border-color:#333">14</div>
<div class="btn" style="left:1229px;top:229px;width:22px;height:21px;background:#3c3c3c"></div>
<div class="a" style="left:1232px;top:232px;width:16px;height:15px;background:#202020"></div>
<div class="btn" style="left:981px;top:254px;width:270px;height:22px;background:linear-gradient(#4f4f4f,#474747);border-color:#333"></div>
<div class="sep" style="left:1048px;top:255px;width:1px;height:20px;background:#333"></div>
<div class="sep" style="left:1115px;top:255px;width:1px;height:20px;background:#333"></div>
<div class="sep" style="left:1183px;top:255px;width:1px;height:20px;background:#333"></div>
<div class="t" style="left:1010px;top:258px;font-family:'Liberation Serif';font-weight:bold;font-size:13px;color:#a0a0a0">B</div>
<div class="t" style="left:1078px;top:258px;font-family:'Liberation Serif';font-style:italic;font-weight:bold;font-size:13px;color:#a0a0a0">I</div>
<div class="t" style="left:1144px;top:257px;font-family:'Liberation Serif';font-weight:bold;font-size:12px;color:#a0a0a0;text-decoration:underline">U</div>
<div class="t" style="left:1212px;top:257px;font-family:'Liberation Serif';font-weight:bold;font-size:12px;color:#a0a0a0;text-decoration:line-through">T</div>

<!-- PROPERTIES -->
<div class="tri" style="left:856px;top:302px"></div>
<div class="hd" style="left:865px;top:299px">Properties</div>
<div class="sec" style="left:856px;top:317px;width:401px;height:412px"></div>
<div class="lb" style="top:328px">Layer Pairs</div>
<div class="dd" style="left:981px;top:323px;width:270px">All Layers</div>
<div class="lb" style="top:351px">Pads/Vias</div>
<div class="dd" style="left:981px;top:349px;width:270px">All</div>
<div class="lb" style="top:378px">Plated/Non Plated</div>
<div class="dd" style="left:981px;top:374px;width:270px">All</div>
<div class="lb" style="top:399px">Border Line Style</div>
<div class="a" style="left:981px;top:398px;width:270px;height:19px;border:1px solid #3a3a3a;border-radius:3px;background:#434343"></div>
<div class="a" style="left:986px;top:407px;width:261px;height:2px;background:#1c1c1c"></div>
<div class="dd" style="left:981px;top:423px;width:120px">Normal</div>
<div class="dd" style="left:1106px;top:423px;width:119px">Solid</div>
<div class="btn" style="left:1229px;top:422px;width:22px;height:22px;background:#3c3c3c"></div>
<div class="a" style="left:1232px;top:425px;width:16px;height:16px;background:#000"></div>
<div class="lb" style="top:450px">Justification</div>
<div class="a" style="left:981px;top:449px;width:62px;height:62px;border:1px solid #2a2a2a;border-radius:3px;background:#2a2a2a;overflow:hidden">
 <div class="a" style="left:0;top:0;width:20px;height:20px;background:#484848"></div>
 <div class="a" style="left:21px;top:0;width:20px;height:20px;background:#484848"></div>
 <div class="a" style="left:42px;top:0;width:20px;height:20px;background:#484848"></div>
 <div class="a" style="left:0;top:21px;width:20px;height:20px;background:#484848"></div>
 <div class="a" style="left:21px;top:21px;width:20px;height:20px;background:#484848"></div>
 <div class="a" style="left:42px;top:21px;width:20px;height:20px;background:#484848"></div>
 <div class="a" style="left:0;top:42px;width:20px;height:20px;background:#5f7fa0"></div>
 <div class="a" style="left:21px;top:42px;width:20px;height:20px;background:#484848"></div>
 <div class="a" style="left:42px;top:42px;width:20px;height:20px;background:#484848"></div>
</div>
<svg class="a" style="left:981px;top:449px" width="62" height="62"><g fill="none" stroke="#eee" stroke-width="1.1">
<path d="M6 5 L14 13 M6 5 H10.5 M6 5 V9.5"/>
<path d="M31 5 V15 M27.5 8.5 L31 5 L34.5 8.5"/>
<path d="M56 5 L48 13 M56 5 H51.5 M56 5 V9.5"/>
<path d="M5 31 H15 M8.5 27.5 L5 31 L8.5 34.5"/>
<path d="M57 31 H47 M53.5 27.5 L57 31 L53.5 34.5"/>
<path d="M6 57 L14 49 M6 57 H10.5 M6 57 V52.5"/>
<path d="M31 57 V47 M27.5 53.5 L31 57 L34.5 53.5"/>
<path d="M56 57 L48 49 M56 57 H51.5 M56 57 V52.5"/>
</g><circle cx="31.5" cy="31" r="3.8" fill="#fff"/></svg>
<div class="lb" style="top:520px">Even Row Color</div>
<div class="btn" style="left:981px;top:516px;width:21px;height:21px;background:#505050;border-color:#262626;border-radius:4px"></div>
<div class="a" style="left:984px;top:519px;width:15px;height:15px;background:#c0c0c0"></div>
<div class="lb" style="top:546px">Non-Even Row Color</div>
<div class="btn" style="left:981px;top:542px;width:21px;height:21px;background:#505050;border-color:#262626;border-radius:4px"></div>
<div class="a" style="left:984px;top:545px;width:15px;height:15px;background:#d3d3d3"></div>
<div class="sep" style="left:862px;top:574px;width:389px"></div>
<div class="cb" style="left:981px;top:586px"></div>
<div class="t" style="left:1001px;top:589px;color:#e4e4e4">Use Document Font</div>
<div class="lb" style="top:606px">Font</div>
<div class="dd" style="left:981px;top:607px;width:177px;height:21px;padding-left:22px">Arial</div>
<div class="t" style="left:987px;top:611px;font-family:'Liberation Serif';font-size:13px;color:#7a7a7a">T</div>
<div class="dd" style="left:1162px;top:607px;width:63px;height:21px;background:#3a3a3a">12</div>
<div class="btn" style="left:1229px;top:606px;width:22px;height:22px;background:#3c3c3c"></div>
<div class="a" style="left:1232px;top:609px;width:16px;height:16px;background:#000"></div>
<div class="btn" style="left:981px;top:632px;width:270px;height:22px;background:linear-gradient(#555,#4a4a4a);border-color:#262626"></div>
<div class="sep" style="left:1048px;top:633px;width:1px;height:20px"></div>
<div class="sep" style="left:1115px;top:633px;width:1px;height:20px"></div>
<div class="sep" style="left:1183px;top:633px;width:1px;height:20px"></div>
<div class="t" style="left:1010px;top:636px;font-family:'Liberation Serif';font-weight:bold;font-size:13px;color:#e8e8e8">B</div>
<div class="t" style="left:1078px;top:636px;font-family:'Liberation Serif';font-style:italic;font-weight:bold;font-size:13px;color:#e8e8e8">I</div>
<div class="t" style="left:1144px;top:635px;font-family:'Liberation Serif';font-weight:bold;font-size:12px;color:#e8e8e8;text-decoration:underline">U</div>
<div class="t" style="left:1212px;top:635px;font-family:'Liberation Serif';font-weight:bold;font-size:12px;color:#e8e8e8;text-decoration:line-through">T</div>
<div class="cb" style="left:981px;top:659px"></div>
<svg class="a" style="left:981px;top:659px" width="15" height="15"><path d="M3.5 7.5 L6 10 L11.5 4.5" fill="none" stroke="#e6e6e6" stroke-width="1.2"/></svg>
<div class="t" style="left:1001px;top:661px;color:#e4e4e4">Show Footer</div>
<div class="sep" style="left:862px;top:684px;width:389px"></div>
<div class="a" style="left:1129px;top:697px;width:125px;height:29px;border:4px solid #ff0000;background:#5b5b5b"></div>
<div class="t" style="left:1158px;top:706px;color:#f0f0f0">Drill Symbols</div>

<!-- UNITS -->
<div class="tri" style="left:856px;top:749px"></div>
<div class="hd" style="left:865px;top:746px">Units</div>
<div class="sec" style="left:856px;top:764px;width:401px;height:60px"></div>
<div class="lb" style="top:776px">Primary Units</div>
<div class="dd" style="left:981px;top:772px;width:244px">Document: Millimeters</div>
<div class="btn" style="left:1229px;top:770px;width:22px;height:22px;background:#4e4e4e"></div>
<svg class="a" style="left:1229px;top:770px" width="22" height="22"><path d="M5.9 10.6 C7.6 5.2 14.2 5.2 15.9 10.6 C14.2 16 7.6 16 5.9 10.6 Z" fill="#f2f2f2"/><circle cx="10.9" cy="10.6" r="2.3" fill="#4e4e4e"/><circle cx="10.9" cy="10.6" r="1" fill="#f2f2f2"/></svg>
<div class="lb" style="top:800px">Dual Units</div>
<div class="dd" style="left:981px;top:797px;width:244px">Document: Mils</div>
<div class="btn" style="left:1229px;top:796px;width:22px;height:22px;background:#4e4e4e;border-color:#262626"></div>
<svg class="a" style="left:1229px;top:796px" width="22" height="22"><path d="M8.2 8.6 C6.8 9.4 6 10.4 5.8 11.2 C7.4 14.6 11.6 15.6 14.6 13.6" fill="none" stroke="#8a8a8a" stroke-width="1.8"/><path d="M12.4 8.4 C14 9 15.3 10 15.9 11.2" fill="none" stroke="#8a8a8a" stroke-width="1.4"/><path d="M5.9 5 L16 15.8" stroke="#8e8e8e" stroke-width="1.2"/></svg>

<!-- PRECISION -->
<div class="tri" style="left:856px;top:845px"></div>
<div class="hd" style="left:865px;top:842px">Precision</div>
<div class="a" style="left:848px;top:0;width:412px;height:902px;overflow:hidden">
<div class="sec" style="left:8px;top:859px;width:401px;height:80px"></div>
<div class="lb" style="top:872px;right:291px">Primary Precision</div>
<div class="dd" style="left:133px;top:870px;width:269px">Document : 0.01 (1/100)</div>
<div class="lb" style="top:895px;right:291px">Dual Precision</div>
<div class="dd" style="left:133px;top:894px;width:269px">Document : 1 (1/1)</div>
</div>
<div class="t" style="left:857px;top:910px;color:#e0e0e0">1 object is selected</div>

<!-- DIALOG -->
<div class="a" style="left:18px;top:308px;width:800px;height:600px;background:linear-gradient(#4b4b4b,#515151 40px,#505050);border:1px solid #1c1c1c"></div>
<div class="t" style="left:322px;top:316px;font-size:13px;line-height:15px;color:#e0e0e0">Drill Symbol Configurations</div>
<div class="a" style="left:775px;top:309px;width:34px;height:22px;background:#990000"></div>
<svg class="a" style="left:775px;top:309px" width="34" height="22"><path d="M12.5 6.5 L21 15 M21 6.5 L12.5 15" stroke="#fff" stroke-width="1.4"/></svg>
<div class="a" style="left:27px;top:339px;width:782px;height:527px;background:#3e3e3e;border:1px solid #262626"></div>
<div class="a" style="left:36px;top:348px;width:764px;height:354px;background:#393939;border:1px solid #262626;overflow:hidden">
<div class="a" style="left:0;top:0;width:764px;height:19px;background:#474747;border-bottom:1px solid #262626"></div>
<div class="a" style="left:119px;top:5px;width:1px;height:12px;background:#1e1e1e"></div>
<div class="a" style="left:239px;top:5px;width:1px;height:12px;background:#1e1e1e"></div>
<div class="a" style="left:359px;top:5px;width:1px;height:12px;background:#1e1e1e"></div>
<div class="a" style="left:479px;top:5px;width:1px;height:12px;background:#1e1e1e"></div>
<div class="a" style="left:599px;top:5px;width:1px;height:12px;background:#1e1e1e"></div>
<div class="a" style="left:719px;top:5px;width:1px;height:12px;background:#1e1e1e"></div>
<div class="t" style="left:6.5px;top:3.7px;color:#e2e2e2;letter-spacing:0.25px">DrillSymbol</div>
<div class="t" style="left:126.0px;top:3.7px;color:#e2e2e2;letter-spacing:0.25px">CountHoles</div>
<div class="t" style="left:246.0px;top:3.7px;color:#e2e2e2;letter-spacing:0.25px">HoleSize</div>
<div class="t" style="left:366.5px;top:3.7px;color:#e2e2e2;letter-spacing:0.25px">Plated</div>
<div class="t" style="left:486.5px;top:3.7px;color:#e2e2e2;letter-spacing:0.25px">HoleType</div>
<div class="t" style="left:606.5px;top:3.7px;color:#e2e2e2;letter-spacing:0.25px">PadShape</div>
<div class="t" style="left:726.5px;top:3.7px;color:#e2e2e2;letter-spacing:0.25px">Description</div>
<div class="a" style="left:0;top:20px;width:764px;height:18px;background:#6282a2;border-bottom:1px solid #2f2f2f"></div>
<div class="t" style="left:127.5px;top:22.7px;color:#ececec">6</div>
<div class="t" style="left:247.5px;top:22.7px;color:#ececec">5.10mm</div>
<div class="t" style="left:367.5px;top:22.7px;color:#ececec">Non-Plated</div>
<div class="t" style="left:487.5px;top:22.7px;color:#ececec">Round</div>
<div class="t" style="left:607.5px;top:22.7px;color:#ececec">Rounded</div>
<div class="a" style="left:0;top:38px;width:764px;height:18px;background:#393939;border-bottom:1px solid #2f2f2f"></div>
<div class="t" style="left:127.5px;top:40.7px;color:#ececec">12</div>
<div class="t" style="left:247.5px;top:40.7px;color:#ececec">0.70mm</div>
<div class="t" style="left:367.5px;top:40.7px;color:#ececec">Plated</div>
<div class="t" style="left:487.5px;top:40.7px;color:#ececec">Round</div>
<div class="t" style="left:607.5px;top:40.7px;color:#ececec">Rounded</div>
<div class="a" style="left:0;top:56px;width:764px;height:18px;background:#393939;border-bottom:1px solid #2f2f2f"></div>
<div class="t" style="left:127.5px;top:58.7px;color:#ececec">3</div>
<div class="t" style="left:247.5px;top:58.7px;color:#ececec">3.40mm</div>
<div class="t" style="left:367.5px;top:58.7px;color:#ececec">Plated</div>
<div class="t" style="left:487.5px;top:58.7px;color:#ececec">Round</div>
<div class="t" style="left:607.5px;top:58.7px;color:#ececec">Rounded</div>
<div class="a" style="left:0;top:74px;width:764px;height:18px;background:#393939;border-bottom:1px solid #2f2f2f"></div>
<div class="t" style="left:127.5px;top:76.7px;color:#ececec">5</div>
<div class="t" style="left:247.5px;top:76.7px;color:#ececec">0.90mm</div>
<div class="t" style="left:367.5px;top:76.7px;color:#ececec">Plated</div>
<div class="t" style="left:487.5px;top:76.7px;color:#ececec">Round</div>
<div class="t" style="left:607.5px;top:76.7px;color:#ececec">Rounded</div>
<div class="a" style="left:0;top:92px;width:764px;height:18px;background:#393939;border-bottom:1px solid #2f2f2f"></div>
<div class="t" style="left:127.5px;top:94.7px;color:#ececec">1424</div>
<div class="t" style="left:247.5px;top:94.7px;color:#ececec">0.30mm</div>
<div class="t" style="left:367.5px;top:94.7px;color:#ececec">Plated</div>
<div class="t" style="left:487.5px;top:94.7px;color:#ececec">Round</div>
<div class="a" style="left:0;top:110px;width:764px;height:18px;background:#393939;border-bottom:1px solid #2f2f2f"></div>
<div class="t" style="left:127.5px;top:112.7px;color:#ececec">138</div>
<div class="t" style="left:247.5px;top:112.7px;color:#ececec">0.40mm</div>
<div class="t" style="left:367.5px;top:112.7px;color:#ececec">Plated</div>
<div class="t" style="left:487.5px;top:112.7px;color:#ececec">Round</div>
</div>
<svg class="a" style="left:80px;top:365px" width="34" height="115"><g fill="none" stroke="#f0f0f0" stroke-width="1.2">
<path d="M10.5 6.5 L14 6.5 L17 9.5 L20 6.5 L23.5 6.5 L23.5 10 L20.5 12.5 L23.5 15.5 L23.5 19 L20 19 L17 16 L14 19 L10.5 19 L10.5 15.5 L13.5 12.5 L10.5 10 Z"/>
<path d="M17 24.2 L23.3 30.5 L17 36.8 L10.7 30.5 Z"/>
<rect x="10.5" y="42.5" width="13" height="13"/><rect x="13.5" y="45.5" width="7" height="7"/>
<circle cx="17" cy="66.6" r="6.2"/><circle cx="17" cy="66.6" r="3"/>
<path d="M11 81.5 H23 L17 91 Z"/><path d="M13.5 83.5 H20.5 L17 89 Z"/>
<path d="M17 96 L23 106 H11 Z"/><path d="M17 109 L23 99 H11 Z"/>
</g><path d="M12 83 L17 90 L22 83" fill="none" stroke="#f0f0f0" stroke-width="0.8"/><circle cx="17" cy="102.5" r="1.6" fill="#f0f0f0"/></svg>
<div class="t" style="left:42.5px;top:713.2px;color:#e2e2e2">Symbol Graphics</div>
<div class="t" style="left:42.5px;top:745.2px;color:#e2e2e2">Symbol Size Table</div>
<div class="t" style="left:42.5px;top:777.2px;color:#e2e2e2">Symbol Size View</div>
<div class="t" style="left:42.5px;top:822.2px;color:#e2e2e2">Symbol Line Style</div>
<div class="dd" style="left:144px;top:709px;width:80px;height:20px"></div>
<svg class="a" style="left:168px;top:711px" width="16" height="16"><path d="M1.5 1.5 L5 1.5 L8 4.5 L11 1.5 L14.5 1.5 L14.5 5 L11.5 8 L14.5 11 L14.5 14.5 L11 14.5 L8 11.5 L5 14.5 L1.5 14.5 L1.5 11 L4.5 8 L1.5 5 Z" fill="none" stroke="#e8e8e8" stroke-width="1.2"/></svg>
<div class="cb" style="left:230px;top:711px;width:16px;height:16px;background:#474747;border-color:#2a2a2a"></div>
<div class="t" style="left:250.5px;top:713.2px;color:#e2e2e2">Sync Symbols with PCB</div>
<div class="inp" style="left:144px;top:741px;width:240px;height:20px;background:#2b2b2b;font-weight:bold;color:#f4f4f4;padding-left:5px">2.1167mm</div>
<div class="inp" style="left:144px;top:773px;width:240px;height:20px;background:#363636;border-color:#323232;color:#8a8a8a;padding-left:5px">2.1167mm</div>
<div class="btn" style="left:390px;top:735px;width:28px;height:64px;background:#505050;border-color:#2a2a2a"></div>
<svg class="a" style="left:390px;top:750px" width="28" height="30"><g fill="none" stroke="#f4f4f4"><path d="M10.6 15.3 V12.4 A3.2 3.2 0 0 1 17 12.4 V15.3 M10.6 17.3 V20.2 A3.2 3.2 0 0 0 17 20.2 V17.3" stroke-width="1.9"/><rect x="12.9" y="11.8" width="1.9" height="9" rx="0.95" stroke-width="1.3"/></g></svg>
<div class="a" style="left:138px;top:805px;width:274px;height:20px;border:1px solid #363636;border-radius:4px;background:#3f3f3f"></div>
<div class="a" style="left:143px;top:814px;width:264px;height:1px;background:#1a1a1a"></div>
<div class="dd" style="left:138px;top:830px;width:123px;height:20px">Thin</div>
<div class="dd" style="left:265px;top:830px;width:121px;height:20px">Solid</div>
<div class="btn" style="left:390px;top:829px;width:22px;height:21px;background:#3a3a3a;border-color:#262626"></div>
<div class="a" style="left:393px;top:832px;width:16px;height:15px;background:#000"></div>
<div class="t" style="left:424.0px;top:710.2px;color:#e2e2e2">Grouping</div>
<div class="a" style="left:418px;top:728px;width:102px;height:36px;border:4px solid #ff0000"></div>
<div class="a" style="left:424px;top:734px;width:87px;height:23px;border:1px solid #a9c6e6;border-radius:3px;background:linear-gradient(#5c5c5c,#4c4c4c)"></div>
<div class="t" style="left:441.0px;top:739.5px;color:#f4f4f4">All objects</div>
<div class="a" style="left:424px;top:762px;width:61px;height:23px;border:1px solid #2c2c2c;border-radius:3px;background:#6080a0;font-size:11px;line-height:21px;color:#ececec;text-align:center;white-space:nowrap">HoleSize</div>
<div class="a" style="left:490px;top:762px;width:49px;height:23px;border:1px solid #2c2c2c;border-radius:3px;background:#6080a0;font-size:11px;line-height:21px;color:#ececec;text-align:center;white-space:nowrap">Plated</div>
<div class="a" style="left:544px;top:762px;width:64px;height:23px;border:1px solid #2c2c2c;border-radius:3px;background:#6080a0;font-size:11px;line-height:21px;color:#ececec;text-align:center;white-space:nowrap">HoleType</div>
<div class="a" style="left:614px;top:762px;width:68px;height:23px;border:1px solid #2c2c2c;border-radius:3px;background:#6080a0;font-size:11px;line-height:21px;color:#ececec;text-align:center;white-space:nowrap">PadShape</div>
<div class="a" style="left:686px;top:762px;width:76px;height:23px;border:1px solid #2c2c2c;border-radius:3px;background:#6080a0;font-size:11px;line-height:21px;color:#ececec;text-align:center;white-space:nowrap">Description</div>
<div class="a" style="left:424px;top:791px;width:90px;height:23px;border:1px solid #2c2c2c;border-radius:3px;background:#6080a0;font-size:11px;line-height:21px;color:#ececec;text-align:center;white-space:nowrap">HoleTolerance</div>
<div class="a" style="left:520px;top:791px;width:77px;height:23px;border:1px solid #2c2c2c;border-radius:3px;background:#6080a0;font-size:11px;line-height:21px;color:#ececec;text-align:center;white-space:nowrap">HoleLength</div>
<div class="btn" style="left:629px;top:874px;width:87px;height:25px;background:linear-gradient(#575757,#4b4b4b);border-color:#2a2a2a;font-size:11px;line-height:23px;color:#ececec;text-align:center">OK</div>
<div class="btn" style="left:722px;top:874px;width:87px;height:25px;background:linear-gradient(#575757,#4b4b4b);border-color:#2a2a2a;font-size:11px;line-height:23px;color:#ececec;text-align:center">Cancel</div>
<svg class="a" style="left:0;top:0" width="1273" height="931"><path d="M1118.5 709.3 L544 740" stroke="#ff0000" stroke-width="2" fill="none"/><path d="M533.6 740.5 L544.8 731.8 L545.8 748.2 Z" fill="#ff0000"/></svg>
</body></html>
